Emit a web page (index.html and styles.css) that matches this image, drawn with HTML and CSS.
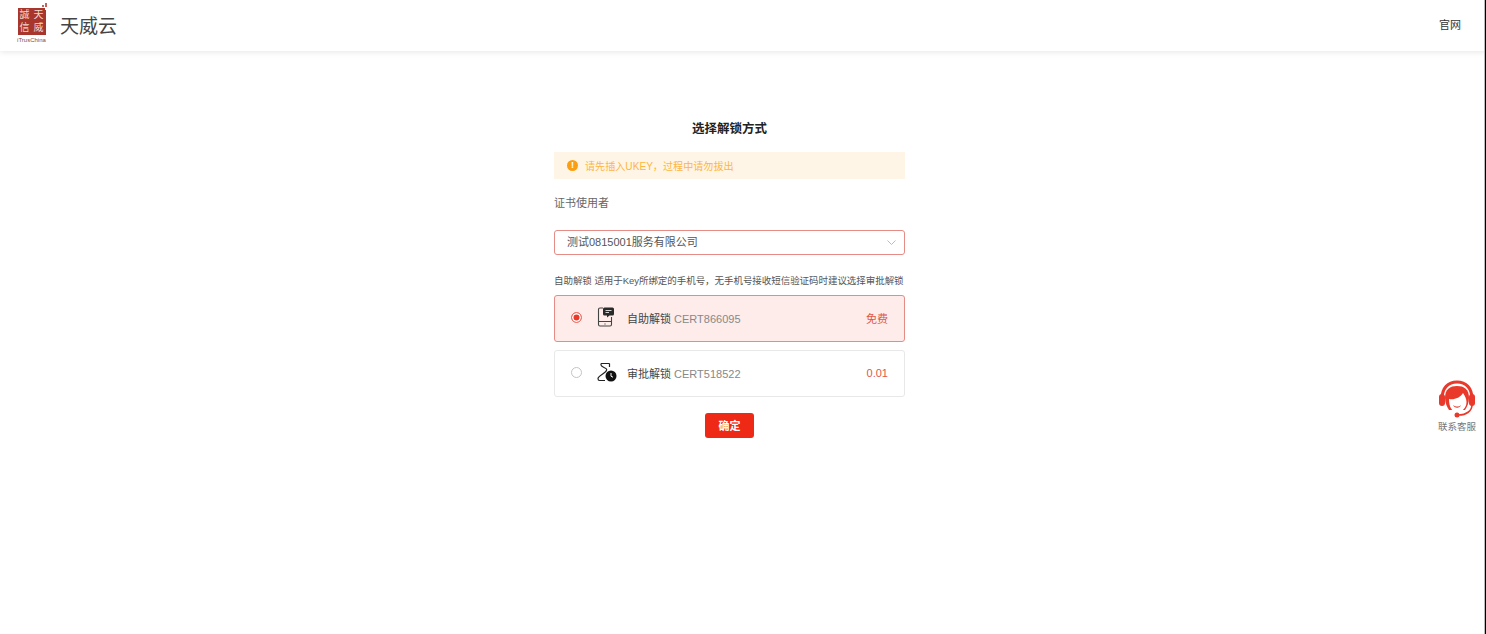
FILE: index.html
```html
<!DOCTYPE html>
<html lang="zh-CN">
<head>
  <meta charset="UTF-8">
  <title>选择解锁方式</title>
  <link rel="stylesheet" href="styles.css">
</head>
<body>
  <header class="topbar">
    <div class="brand">
      <div class="logo">
        <div class="logo-box">
          <span>誠</span><span>天</span><span>信</span><span>威</span>
          <i class="logo-dots"></i>
        </div>
        <div class="logo-name">iTrusChina</div>
      </div>
      <span class="brand-name">天威云</span>
    </div>
    <a class="site-link">官网</a>
  </header>

  <main class="panel">
    <h1>选择解锁方式</h1>
    <div class="notice">
      <span class="notice-icon">!</span>
      <span>请先插入UKEY，过程中请勿拔出</span>
    </div>
    <div class="field-label">证书使用者</div>
    <div class="select">
      <span>测试0815001服务有限公司</span>
      <svg width="9" height="5" viewBox="0 0 9 5"><path d="M.5.5 4.500 4.500 8.500.5" fill="none" stroke="#bbb" stroke-width="1"/></svg>
    </div>
    <p class="hint">自助解锁 适用于Key所绑定的手机号，无手机号接收短信验证码时建议选择审批解锁</p>

    <div class="option option-active">
      <span class="radio radio-on"></span>
      <svg class="option-icon" width="20" height="20" viewBox="0 0 20 20">
        <path d="M6 1H3A1.500 1.500 0 0 0 1.500 2.500v15A1.500 1.500 0 0 0 3 19h10a1.500 1.500 0 0 0 1.500-1.500V10" fill="none" stroke="#444" stroke-width="1.100"/>
        <path d="M1.500 14.500h13M8 16.500v1" fill="none" stroke="#444" stroke-width="1.100"/>
        <path d="M7.500 .5h8A1.500 1.500 0 0 1 17 2v5a1.500 1.500 0 0 1-1.500 1.500h-3L10 10.500v-2H7.500A1.500 1.500 0 0 1 6 7V2A1.500 1.500 0 0 1 7.500 .5z" fill="#2a2a2a"/>
        <path d="M8.500 3.500h6M8.500 5.500h3.500" stroke="#fff" stroke-width=".8"/>
      </svg>
      <span class="option-name">自助解锁 <em>CERT866095</em></span>
      <span class="option-price">免费</span>
    </div>

    <div class="option">
      <span class="radio"></span>
      <svg class="option-icon" width="20" height="20" viewBox="0 0 20 20">
        <path d="M4 1.500h8.500M4 1.500v1.500c0 2 4.500 2.500 5.500 4 .6 1-.5 2.500-2.500 4S1 14.500 1 16.500c0 1.200.6 2 1.500 2H8M12.500 1.500V5" fill="none" stroke="#222" stroke-width="1.200"/>
        <circle cx="14" cy="14" r="5.500" fill="#111"/>
        <path d="M14 11v3.200l2 1" fill="none" stroke="#fff" stroke-width="1"/>
      </svg>
      <span class="option-name">审批解锁 <em>CERT518522</em></span>
      <span class="option-price">0.01</span>
    </div>

    <div class="actions">
      <button class="confirm">确定</button>
    </div>
  </main>

  <aside class="service">
    <svg width="38" height="38" viewBox="0 0 38 38">
      <path d="M4 19C4 8 10 2 19 2s15 6 15 17" fill="none" stroke="#e8392b" stroke-width="3"/>
      <rect x="1" y="14" width="6" height="12" rx="3" fill="#e8392b"/>
      <rect x="31" y="14" width="6" height="12" rx="3" fill="#e8392b"/>
      <path d="M7 18C7 9 12 6 19 6s12 3 12 12c0 5-2 9-4 12H11c-2-3-4-7-4-12z" fill="#e8392b"/>
      <path d="M11 19c5 1 11-1 14-6 2 3 3.500 6 3.500 9 0 6-4.500 10-9.500 10S11 27 11 19z" fill="#fff"/>
      <path d="M15 25c3 2 6 2 8 0-1 3.500-6.500 3.500-8 0z" fill="#e8392b"/>
      <path d="M34 25c0 6-6 10-13 10" fill="none" stroke="#e8392b" stroke-width="1.600"/>
      <circle cx="19" cy="35" r="2.500" fill="#e8392b"/>
    </svg>
    <span class="service-label">联系客服</span>
  </aside>
</body>
</html>
```

FILE: styles.css
```css
body {
  margin: 0;
  height: 634px;
  overflow: hidden;
  position: relative;
  background: #fff;
  color: #333;
  font-family: "Liberation Sans", "Noto Sans CJK SC", sans-serif;
}
/* dark edge on the right of the window */
body::after {
  content: "";
  position: absolute;
  top: 0;
  right: 0;
  bottom: 0;
  width: 1px;
  background: #000;
  border-left: 1px solid #bbb;
}
.topbar {
  height: 51px;
  display: flex;
  align-items: center;
  justify-content: space-between;
  padding: 0 25px 0 17px;
  background: #fff;
  box-shadow: 0 1px 6px rgba(0,0,0,0.1);
}
.brand {
  display: flex;
  align-items: center;
  gap: 14px;
}
.logo {
  width: 29px;
  display: flex;
  flex-direction: column;
  align-items: center;
}
.logo-box {
  position: relative;
  width: 28px;
  height: 27px;
  background: #a8362c;
  color: #f0d9d0;
  display: grid;
  grid-template-columns: 1fr 1fr;
  font-size: 10px;
  line-height: 13px;
  text-align: center;
}
.logo-dots {
  position: absolute;
  top: -3px;
  right: -1px;
  width: 2px;
  height: 2px;
  background: #c9605a;
  box-shadow: -3px 0 #c9605a, 0 3px #fff, 0 -2px #c9605a;
}
.logo-name {
  font-size: 6px;
  line-height: 8px;
  margin-top: 1px;
  color: #8a4a42;
  white-space: nowrap;
}
.brand-name {
  font-size: 19px;
  color: #444;
  margin-bottom: 3px;
}
.site-link {
  font-size: 11px;
  color: #333;
  margin-bottom: 3px;
}
.panel {
  width: 351px;
  margin: 69px 0 0 554px;
}
h1 {
  margin: 0;
  font-size: 12.500px;
  line-height: 18px;
  font-weight: 700;
  text-align: center;
  color: #222;
}
.notice {
  height: 27px;
  margin-top: 14px;
  padding-left: 13px;
  display: flex;
  align-items: center;
  gap: 7px;
  background: #fff5e6;
  color: #fdb53f;
  font-size: 10.100px;
}
.notice-icon {
  width: 11px;
  height: 11px;
  border-radius: 50%;
  background: #fa9f14;
  color: #fff;
  font-size: 9px;
  line-height: 11px;
  font-weight: 700;
  text-align: center;
}
.field-label {
  margin-top: 16px;
  font-size: 11px;
  line-height: 16px;
  color: #666;
}
.select {
  height: 23px;
  margin-top: 19px;
  padding: 0 8px 0 12px;
  display: flex;
  align-items: center;
  justify-content: space-between;
  border: 1px solid #e58c86;
  border-radius: 3px;
  font-size: 11px;
  color: #555;
}
.select span {
  margin-top: -4px;
}
.hint {
  margin: 19px 0 0;
  font-size: 9.500px;
  letter-spacing: -0.05px;
  line-height: 13px;
  color: #555;
  white-space: nowrap;
}
.option {
  height: 45px;
  margin-top: 8px;
  padding: 0 16px;
  display: flex;
  align-items: center;
  border: 1px solid #e8e8e8;
  border-radius: 3px;
  font-size: 11px;
}
.option-active {
  background: #fdecea;
  border-color: #e58c86;
}
.radio {
  width: 11px;
  height: 11px;
  box-sizing: border-box;
  border: 1px solid #c4c4c4;
  border-radius: 50%;
  background: #fff;
  margin-top: -3px;
}
.radio-on {
  border-color: #f0736a;
  background: #e8392b;
  box-shadow: inset 0 0 0 1.500px #fff;
}
.option-icon {
  margin: -3px 10px 0 15px;
}
.option-name {
  flex: 1;
  color: #444;
  margin-top: -2px;
}
.option-name em {
  font-style: normal;
  color: #888;
}
.option-price {
  color: #e0574c;
  margin-top: -2px;
}
.actions {
  margin-top: 16px;
  text-align: center;
}
.confirm {
  width: 49px;
  height: 25px;
  padding: 0 0 2px;
  border: none;
  border-radius: 3px;
  background: #ee2a16;
  color: #fff;
  font-size: 11px;
  font-weight: 700;
  font-family: inherit;
}
.service {
  position: absolute;
  right: 10px;
  top: 380px;
  display: flex;
  flex-direction: column;
  align-items: center;
  font-size: 9.500px;
  line-height: 13px;
  color: #777;
}
.service-label {
  margin-top: 2px;
}
```
